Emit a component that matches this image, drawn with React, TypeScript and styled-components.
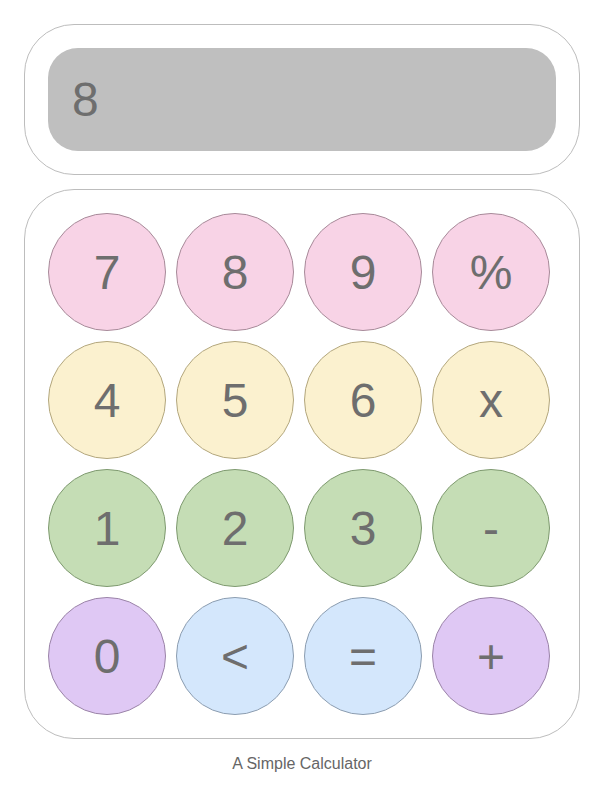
import React from "react";
import styled, { createGlobalStyle } from "styled-components";

const Global = createGlobalStyle`
  * { box-sizing: border-box; }
  body { margin: 0; background: #fff; font-family: "Liberation Sans", Arial, sans-serif; }
`;

const Page = styled.div`
  display: flex;
  flex-direction: column;
  padding: 24px;
  width: 604px;
`;

const DisplayCard = styled.div`
  border: 1px solid #bdbdbd;
  border-radius: 50px;
  padding: 23px;
  height: 151px;
`;

const Screen = styled.div`
  background: #bfbfbf;
  border-radius: 30px;
  height: 103px;
  display: flex;
  align-items: center;
  padding-left: 24px;
  font-size: 48px;
  color: #6e6e6e;
`;

const Keypad = styled.div`
  margin-top: 14px;
  border: 1px solid #bdbdbd;
  border-radius: 50px;
  padding: 23px;
  display: grid;
  grid-template-columns: repeat(4, 118px);
  grid-auto-rows: 118px;
  gap: 10px;
`;

const palette = {
  pink: ["#f8d3e6", "#a78a99"],
  yellow: ["#fbf1cf", "#b3a77e"],
  green: ["#c5ddb5", "#7f9a70"],
  purple: ["#dfc8f4", "#9b84a8"],
  blue: ["#d4e7fc", "#8c9db0"],
} as const;

type Tone = keyof typeof palette;

const Key = styled.div<{ $tone: Tone }>`
  width: 118px;
  height: 118px;
  border-radius: 50%;
  background: ${(p) => palette[p.$tone][0]};
  border: 1px solid ${(p) => palette[p.$tone][1]};
  display: flex;
  align-items: center;
  justify-content: center;
  font-size: 48px;
  color: #6e6e6e;
`;

const Caption = styled.div`
  margin-top: 16px;
  text-align: center;
  font-size: 16px;
  color: #666;
`;

const keys: [string, Tone][] = [
  ["7", "pink"], ["8", "pink"], ["9", "pink"], ["%", "pink"],
  ["4", "yellow"], ["5", "yellow"], ["6", "yellow"], ["x", "yellow"],
  ["1", "green"], ["2", "green"], ["3", "green"], ["-", "green"],
  ["0", "purple"], ["<", "blue"], ["=", "blue"], ["+", "purple"],
];

export default function App() {
  return (
    <>
      <Global />
      <Page>
        <DisplayCard>
          <Screen>8</Screen>
        </DisplayCard>
        <Keypad>
          {keys.map(([k, t]) => (
            <Key key={k} $tone={t}>{k}</Key>
          ))}
        </Keypad>
        <Caption>A Simple Calculator</Caption>
      </Page>
    </>
  );
}
